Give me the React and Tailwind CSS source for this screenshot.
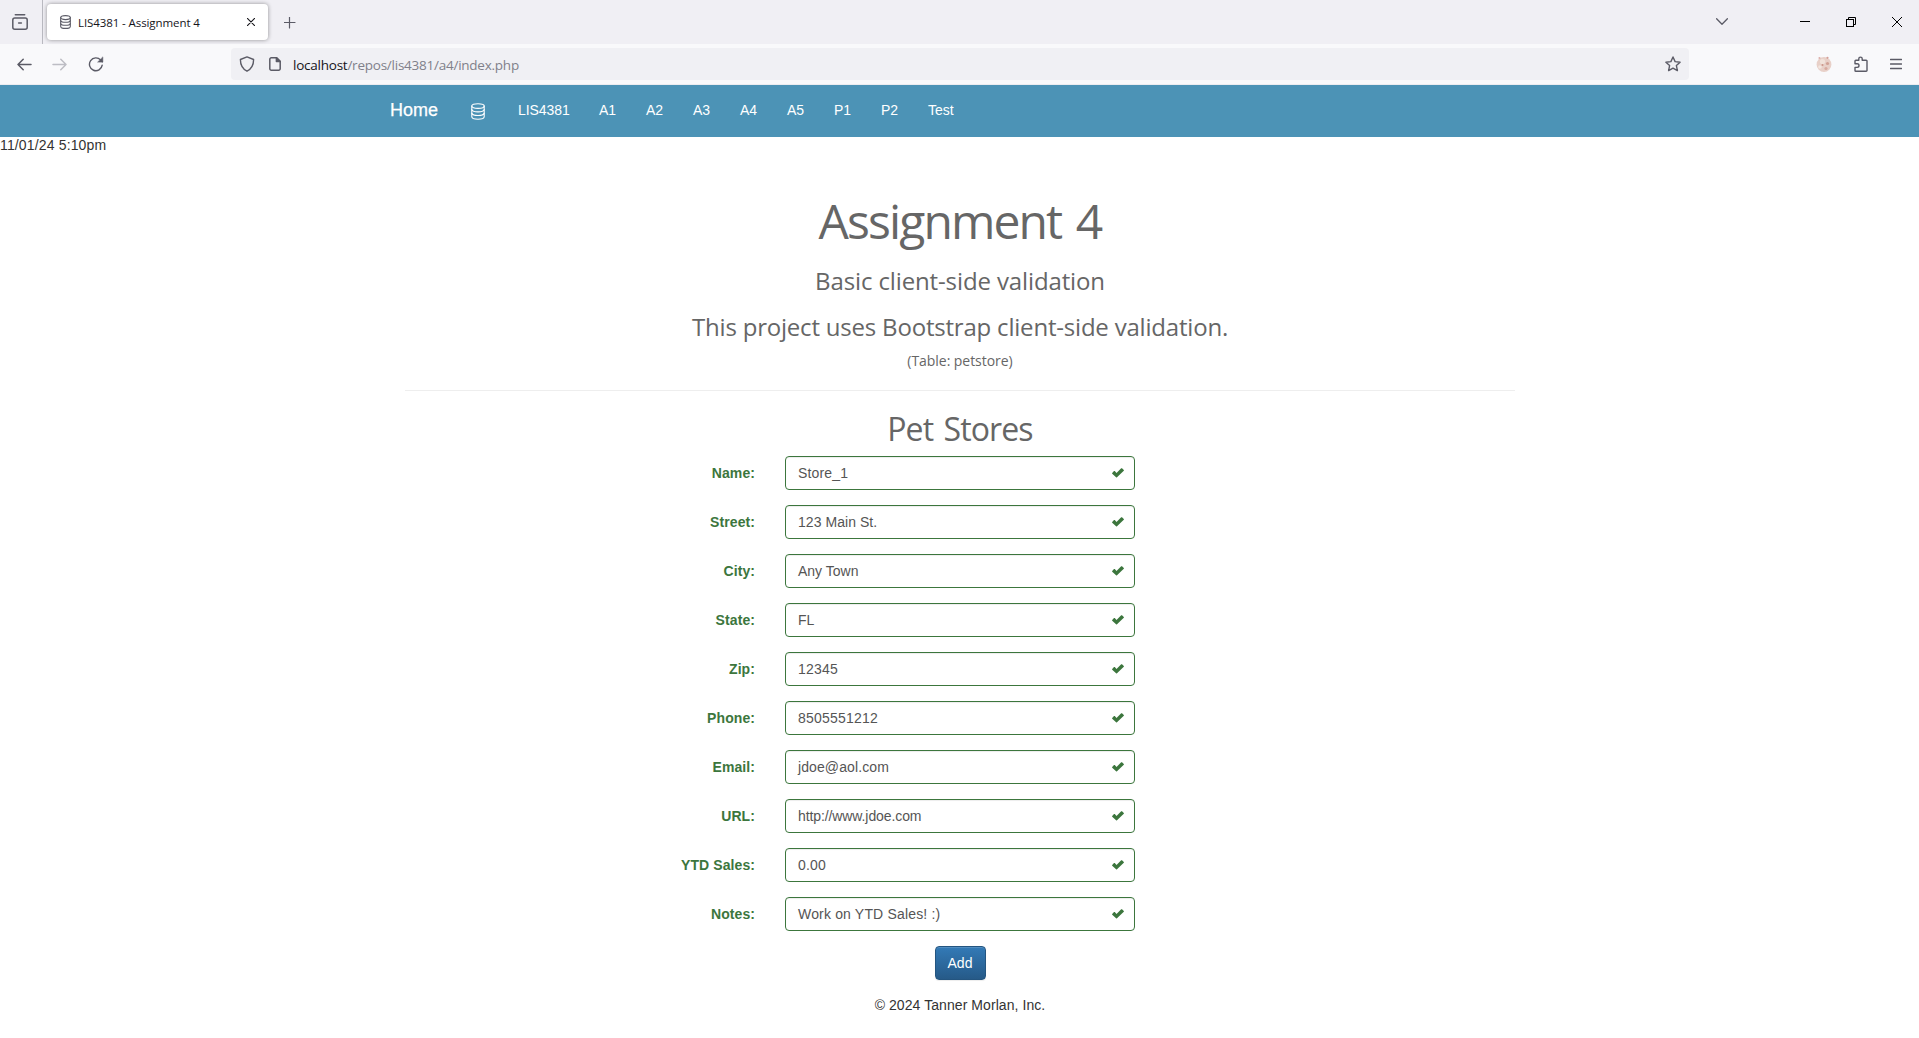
import React from "react";

const sans = "font-['Liberation_Sans',Arial,sans-serif]";
const head = "font-['Open_Sans','Noto_Sans',sans-serif] font-[450]";
const ui = "font-['Open_Sans','Noto_Sans',sans-serif]";

const links = ["A1", "A2", "A3", "A4", "A5", "P1", "P2", "Test"];
const fields = [
  ["Name:", "Store_1", "tracking-[0.15px]"],
  ["Street:", "123 Main St.", "tracking-[0.05px]"],
  ["City:", "Any Town", "tracking-normal"],
  ["State:", "FL", "tracking-normal"],
  ["Zip:", "12345", "tracking-[0.2px]"],
  ["Phone:", "8505551212", "tracking-[0.2px]"],
  ["Email:", "jdoe@aol.com", "tracking-[0.1px]"],
  ["URL:", "http://www.jdoe.com", "tracking-[-0.1px]"],
  ["YTD Sales:", "0.00", "tracking-[0.2px]"],
  ["Notes:", "Work on YTD Sales! :)", "tracking-[0.17px]"],
];

function Svg({ className, box = "0 0 16 16", sw = 1.4, children }) {
  return (
    <svg className={"shrink-0 " + className} viewBox={box} fill="none" stroke="currentColor" strokeWidth={sw} strokeLinecap="round" strokeLinejoin="round">
      {children}
    </svg>
  );
}

function Database({ className, sw }) {
  return (
    <Svg className={className} box="0 0 14 17" sw={sw}>
      <path d="M.8 3C.8 1.500 3.200.7 7 .7s6.200.8 6.200 2.300S10.800 5.400 7 5.400.8 4.500.8 3z" />
      <path d="M.8 3v10.800c0 1.500 2.400 2.500 6.200 2.500s6.200-1 6.200-2.500V3" />
      <path d="M.8 6.600C1.300 8 3.500 8.900 7 8.900s5.700-.9 6.200-2.300M.8 10.200c.5 1.400 2.700 2.300 6.200 2.300s5.700-.9 6.200-2.300" />
    </Svg>
  );
}

function TabDatabase() {
  return (
    <Svg className="h-[14px] w-[11px]" box="0 0 11 14" sw={1.1}>
      <ellipse cx="5.5" cy="2.6" rx="4.8" ry="2" />
      <path d="M.7 2.6v8.8c0 1.200 2.100 2 4.800 2s4.800-.8 4.800-2V2.600" />
      <path d="M.7 5.700c.4 1 2.200 1.600 4.800 1.600s4.400-.6 4.800-1.600M.7 8.700c.4 1 2.200 1.600 4.800 1.600s4.400-.6 4.800-1.600" />
    </Svg>
  );
}

function TabStrip() {
  return (
    <div className="flex h-11 bg-[#f0eff4] text-[#5b5b66]">
      <div className="flex w-[43px] border-r border-[#b9b9c0] pl-3 pt-[14px]">
        <Svg className="h-4 w-4" sw={1.5}>
          <path d="M3.3.8h9.4" />
          <rect x=".8" y="4" width="14.4" height="11.2" rx="2" />
          <path d="M6.6 9h2.8" />
        </Svg>
      </div>
      <div className="ml-1 mt-1 flex h-9 w-[221px] items-center rounded bg-white pl-[13px] shadow-[0_0_4px_rgba(0,0,0,0.4)]">
        <TabDatabase />
        <span className={ui + " ml-[7px] mt-px w-[122px] whitespace-nowrap text-[11.5px] leading-4 tracking-[-0.09px] text-[#15141a]"}>
          LIS4381 - Assignment 4
        </span>
        <Svg className="ml-[47px] h-2 w-2 text-[#15141a]" box="0 0 8 8" sw={1.1}>
          <path d="M.4.4l7.2 7.2M7.6.4L.4 7.6" />
        </Svg>
      </div>
      <Svg className="ml-[16px] mt-[17px] h-3 w-3" box="0 0 12 12" sw={1.2}>
        <path d="M5.5 0v11M0 5.5h11" />
      </Svg>
      <div className="ml-auto flex text-[#15141a]">
        <Svg className="mr-[72px] mt-[18px] h-[7px] w-3 text-[#5b5b66]" box="0 0 12 7" sw={1.3}>
          <path d="M.6.8L6 6.2 11.4.8" />
        </Svg>
        <div className="mr-9 mt-[21px] h-px w-[10px] bg-black" />
        <svg className="mr-9 mt-[17px] h-[10px] w-[10px]" viewBox="0 0 10 10" fill="none" stroke="#000" strokeWidth="1">
          <rect x=".5" y="2.5" width="7" height="7" />
          <path d="M2.5 2.5v-2h7v7h-2" />
        </svg>
        <svg className="mr-[17px] mt-[17px] h-[10px] w-[10px]" viewBox="0 0 10 10" fill="none" stroke="#000" strokeWidth="1">
          <path d="M0 0l10 10M10 0L0 10" />
        </svg>
      </div>
    </div>
  );
}

function AddressBar() {
  return (
    <div className="flex h-[41px] items-start border-b border-[#ececf0] bg-[#f9f9fb] text-[#5b5b66]">
      <Svg className="ml-[17px] mt-[14px] h-[13px] w-[15px]" box="0 0 15 13" sw={1.5}>
        <path d="M14 6.5H1M6.2 1.2L1 6.5l5.2 5.3" />
      </Svg>
      <Svg className="ml-[20px] mt-[14px] h-[13px] w-[15px] text-[#bdbdc4]" box="0 0 15 13" sw={1.5}>
        <path d="M1 6.5h13M8.8 1.2L14 6.5l-5.2 5.3" />
      </Svg>
      <Svg className="ml-[21px] mt-[12px] h-4 w-4" sw={1.4}>
        <path d="M14.2 9.2a6.4 6.4 0 1 1-1.5-5.1l1.6 1.6" />
        <path d="M14.8 1.3v4.8h-4.8z" fill="currentColor" strokeWidth=".6" />
      </Svg>
      <div className="ml-[127px] mt-1 flex h-8 w-[1458px] items-center rounded bg-[#f0f0f4] pl-2">
        <Svg className="h-4 w-4" sw={1.4}>
          <path d="M8 .9l6.6 2.6c0 5-1.7 9.2-6.6 11.7C3.1 12.7 1.4 8.5 1.4 3.5z" />
        </Svg>
        <Svg className="ml-[14px] h-[14px] w-3" box="0 0 12 14" sw={1.5}>
          <path d="M2.3.8h5.4l3.5 3.5v7.4a1.5 1.5 0 0 1-1.5 1.5H2.3a1.5 1.5 0 0 1-1.5-1.5V2.3A1.5 1.5 0 0 1 2.3.8z" />
          <path d="M7.4.9v3.7h3.7z" fill="currentColor" />
        </Svg>
        <span className={ui + " ml-3 mt-[2px] whitespace-nowrap text-[13.5px] leading-5 tracking-[-0.24px] text-[#80808a]"}>
          <span className="text-[#15141a]">localhost</span>/repos/lis4381/a4/index.php
        </span>
        <Svg className="ml-auto mr-2 h-4 w-4" sw={1.4}>
          <path d="M8 1l2.100 4.600 5 .6-3.700 3.400 1 5L8 12.100l-4.400 2.500 1-5L.9 6.200l5-.6z" />
        </Svg>
      </div>
      <svg className="ml-auto mt-3 h-4 w-4" viewBox="0 0 16 16">
        <circle cx="8" cy="8.5" r="7.4" fill="#e8d0c8" />
        <circle cx="3.5" cy="2" r="1.1" fill="#dcaea8" />
        <circle cx="11.5" cy="1.8" r="1.1" fill="#d49f99" />
        <circle cx="6.5" cy="5.5" r="2.6" fill="#f1e2da" />
        <circle cx="11.5" cy="7.5" r="1.6" fill="#d1a195" />
        <circle cx="4" cy="11" r="1.8" fill="#f3e6df" />
        <circle cx="10" cy="12.5" r="1.6" fill="#d8aba0" />
        <circle cx="6.5" cy="9" r="1" fill="#cb9589" />
      </svg>
      <Svg className="ml-[22px] mt-3 h-4 w-[14px]" box="0 0 14 16" sw={1.4}>
        <path d="M1 6.8V5a.8.8 0 0 1 .8-.8h3V2.8a1.7 1.7 0 0 1 3.4 0v1.4h4a.8.8 0 0 1 .8.8v9.4a.8.8 0 0 1-.8.8H1.8a.8.8 0 0 1-.8-.8v-3h2.2a1.7 1.7 0 0 0 0-3.600H1z" />
      </Svg>
      <Svg className="ml-[22px] mr-[17px] mt-[14px] h-3 w-3" box="0 0 12 12" sw={1.3}>
        <path d="M.5 1.500h11M.5 6h11M.5 10.500h11" />
      </Svg>
    </div>
  );
}

export default function App() {
  return (
    <div className={sans + " h-[1038px] w-[1919px] overflow-hidden bg-white text-sm leading-5 text-[#333]"}>
      <TabStrip />
      <AddressBar />
      <nav className="flex h-[52px] bg-[#4c93b6] pb-0.5 pl-[390px] text-white">
        <div className="flex items-center">
          <span className="w-[48px] text-lg [-webkit-text-stroke:0.25px_white]">Home</span>
          <Database className="ml-[33px] mt-[3px] h-[17px] w-[14px]" sw={1.1} />
          <span className="ml-[33px] w-[82px] tracking-[-0.05px]">LIS4381</span>
          <div className="-ml-px flex gap-[30px]">
            {links.map((l) => (
              <span key={l} className="w-[17px]">{l}</span>
            ))}
          </div>
        </div>
      </nav>
      <div className="-mt-0.5 mb-0.5 h-5 tracking-[0.15px]">11/01/24 5:10pm</div>
      <main className="ml-[405px] flex w-[1110px] flex-col items-center text-[#666]">
        <h1 className={head + " mt-[36px] whitespace-nowrap text-[48px] leading-[56px] tracking-[-1.9px] [word-spacing:4px]"}>Assignment 4</h1>
        <h3 className={head + " mt-[17px] whitespace-nowrap text-[24px] leading-[30px] tracking-[-0.12px]"}>Basic client-side validation</h3>
        <h3 className={head + " mt-4 whitespace-nowrap text-[24px] leading-[30px] tracking-[-0.2px]"}>This project uses Bootstrap client-side validation.</h3>
        <h5 className={head + " mt-[9px] whitespace-nowrap text-[14px] leading-5 tracking-[-0.05px]"}>(Table: petstore)</h5>
        <div className="mt-[19px] h-px w-full bg-[#eee]" />
        <h2 className={head + " mt-[20px] mb-[9px] whitespace-nowrap text-[32px] leading-9 tracking-[-0.9px] [word-spacing:3px]"}>Pet Stores</h2>
        <form className="flex w-[350px] flex-col gap-[15px]">
          {fields.map(([label, value, tracking]) => (
            <div key={label} className="-ml-[130px] flex h-[34px] items-center">
              <label className="w-[100px] text-right font-bold tracking-[0.08px] text-[#3c763d]">{label}</label>
              <div className="ml-[30px] flex h-[34px] w-[350px] shrink-0 items-center rounded border border-[#3c763d] px-3 text-[#555] shadow-[inset_0_1px_1px_rgba(0,0,0,0.075)]">
                <span className={tracking}>{value}</span>
                <svg className="-mr-[2px] ml-auto h-[10px] w-3" viewBox="0 0 12 10" fill="#3c763d">
                  <path d="M.2 4.9L2 3.1q.4-.3.8 0L4.5 4.9 9.2.3q.4-.3.8 0L11.8 2q.3.4 0 .8L5 9.3q-.5.4-.9 0L.2 5.7q-.3-.4 0-.8z" />
                </svg>
              </div>
            </div>
          ))}
        </form>
        <button type="button" className="mt-[15px] h-[34px] w-[51px] rounded border border-[#245580] bg-linear-to-b from-[#337ab7] to-[#265a88] text-white shadow-[inset_0_1px_0_rgba(255,255,255,0.15),0_1px_1px_rgba(0,0,0,0.075)]">
          Add
        </button>
        <p className="mt-[15px] tracking-[0.07px] text-[#333]">© 2024 Tanner Morlan, Inc.</p>
      </main>
    </div>
  );
}
